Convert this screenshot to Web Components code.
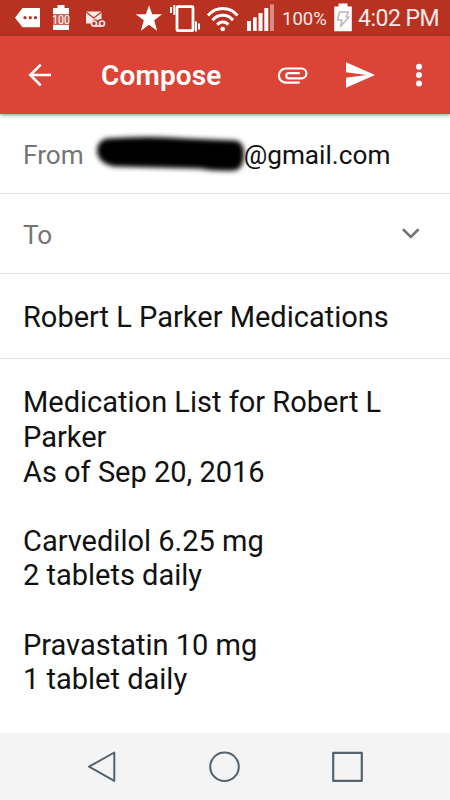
<!DOCTYPE html>
<html lang="en">
<head>
<meta charset="utf-8">
<title>Compose</title>
<style>
  body {
    margin: 0;
    background: #fff;
    font-family: Roboto, "Noto Sans", sans-serif;
    color: #111;
  }
</style>
</head>
<body>
<mail-screen></mail-screen>

<script>
// viewBox of each icon is also its size in pixels
const icons = {
  tag: ['15 0 25 36', `
    <path fill="#fff" d="M15 17.7 22.5 8H40v19.2H22.5z"/>
    <g fill="#b93221"><circle cx="25" cy="17.7" r="1.6"/><circle cx="30.3" cy="17.7" r="1.6"/><circle cx="35.5" cy="17.7" r="1.6"/></g>`],
  level: ['51 0 20 36', `
    <path fill="#fff" d="M57.5 5h7v3H69v6H53V8h4.500zM53 25h16v5H53z"/>
    <path fill="#fff" fill-opacity=".25" d="M53 14h16v11H53z"/>
    <text x="61" y="23.700" text-anchor="middle" font-size="12" textLength="18" lengthAdjust="spacingAndGlyphs" fill="#fff">100</text>`],
  voicemail: ['85 0 21 36', `
    <path fill="#fbe9e7" d="M86 11.500h15.500V19a4 4 0 0 0-4 1.500 3.500 3.500 0 0 0-6 3H86z"/>
    <path fill="none" stroke="#b93221" stroke-width="1.200" d="m86 12 7.800 6 7.700-6"/>
    <g fill="none" stroke="#fbe9e7" stroke-width="1.700"><circle cx="94" cy="23.500" r="2.500"/><circle cx="102" cy="23.500" r="2.500"/><path d="M94 26h8"/></g>`],
  star: ['136 0 27 36', `
    <path fill="#fff" d="m149 5.300 3.200 9h9.900l-7.900 6 2.900 10.500-8.100-6.100-8.100 6.100 2.900-10.500-7.900-6h9.900z"/>`],
  vibrate: ['169 0 32 36', `
    <rect x="177" y="6.700" width="16" height="24" rx="1" fill="none" stroke="#fff" stroke-width="2.800"/>
    <path fill="none" stroke="#fff" stroke-width="2" d="M174.300 5v10M171 7v6M196 21.500v10M199 23.500v6"/>`],
  wifi: ['206 0 33 36', `
    <g fill="none" stroke="#fff" stroke-width="3"><path d="M208 15.500c8-9.300 21.500-9.300 29.500 0M212.500 20.300c5.500-6.600 15-6.600 20.500 0M217.300 24.700c3-3.700 8-3.700 11 0"/></g>
    <circle cx="222.700" cy="29" r="2.300" fill="#fff"/>`],
  signal: ['246 0 29 36', `
    <path fill="#fff" d="M247 21h4v10h-4zM253 17.300h3.700V31H253zM258.500 13h4v18h-4zM264.300 8h4v23h-4z"/>
    <path fill="#d98c82" d="M270 4.300h4V31h-4z"/>`],
  battery: ['334 0 18 36', `
    <path fill="#fff" d="M338.500 3.500h9v3h4.300v24.700H334.200V6.500h4.300z"/>
    <path fill="#fff" stroke="#b9b9b9" stroke-width="1.500" stroke-linejoin="round" d="M339.500 12h9l-2.500 5h3l-8.500 9.500 1.500-6.500h-4.500z"/>`],
  back: ['26 61 28 28', `
    <path fill="none" stroke="#fff" stroke-width="2.600" d="M51 75H30.500M40.700 64.700 30.300 75l10.400 10.300"/>`],
  attach: ['277 60 31 31', `
    <path fill="none" stroke="#fff" stroke-width="2.200" d="M299.700 82.700H286a7.100 7.100 0 0 1 0-14.200h15.500a4.900 4.900 0 0 1 0 9.800H288.800a2.500 2.500 0 0 1 0-5.100h11"/>`],
  send: ['345 60 31 31', `
    <path fill="#fff" d="M346 62.300 375 75l-29 12.700v-9.900L366.500 75 346 72.200z"/>`],
  more: ['412 60 14 31', `
    <g fill="#fff"><circle cx="419" cy="66.700" r="3"/><circle cx="419" cy="75" r="3"/><circle cx="419" cy="83.400" r="3"/></g>`],
  chevron: ['400 227 22 16', `
    <path fill="none" stroke="#757575" stroke-width="2.600" d="m403 229.300 7.800 7.700 7.800-7.700"/>`],
  navBack: ['87 750 30 34', `
    <path fill="none" stroke="#54636e" stroke-width="2" stroke-linejoin="round" d="M89 766.700 114.300 752.500v28.400z"/>`],
  navHome: ['208 750 33 34', `
    <circle cx="224.500" cy="766.700" r="14.300" fill="none" stroke="#54636e" stroke-width="2"/>`],
  navRecent: ['331 750 33 34', `
    <path fill="none" stroke="#54636e" stroke-width="2.200" stroke-linejoin="round" d="M333.200 752.800h28.600v28h-28.600z"/>`],
};

class MailIcon extends HTMLElement {
  connectedCallback() {
    const [box, shapes] = icons[this.getAttribute('name')];
    const [, , width, height] = box.split(' ');
    this.attachShadow({ mode: 'open' });
    this.shadowRoot.innerHTML = `
      <style>
        :host { display: block; flex: none; }
        svg { display: block; }
      </style>
      <svg viewBox="${box}" width="${width}" height="${height}">${shapes}</svg>
    `;
  }
}

class StatusBar extends HTMLElement {
  connectedCallback() {
    this.attachShadow({ mode: 'open' });
    this.shadowRoot.innerHTML = `
      <style>
        :host {
          display: flex;
          height: 36px;
          padding-left: 15px;
          background: #b93221;
          color: #fbe9e7;
          line-height: 37px;
          white-space: nowrap;
        }
        .level { margin-left: 11px; }
        .voicemail { margin-left: 14px; }
        .star { margin-left: 30px; }
        .vibrate { margin-left: 6px; }
        .wifi { margin-left: 5px; }
        .signal { margin-left: 7px; }
        .percent { width: 52px; margin-left: 7px; font-size: 18.500px; line-height: 38px; }
        .time { margin-left: 6px; font-size: 23px; letter-spacing: -.5px; }
      </style>
      <mail-icon name="tag"></mail-icon>
      <mail-icon class="level" name="level"></mail-icon>
      <mail-icon class="voicemail" name="voicemail"></mail-icon>
      <mail-icon class="star" name="star"></mail-icon>
      <mail-icon class="vibrate" name="vibrate"></mail-icon>
      <mail-icon class="wifi" name="wifi"></mail-icon>
      <mail-icon class="signal" name="signal"></mail-icon>
      <span class="percent">100%</span>
      <mail-icon name="battery"></mail-icon>
      <span class="time">4:02 PM</span>
    `;
  }
}

class AppBar extends HTMLElement {
  connectedCallback() {
    this.attachShadow({ mode: 'open' });
    this.shadowRoot.innerHTML = `
      <style>
        :host {
          display: flex;
          align-items: center;
          box-sizing: border-box;
          height: 78px;
          padding: 0 24px 0 26px;
          background: #db4437;
          box-shadow: 0 1px 4px rgba(0, 0, 0, .45);
          color: #fff;
        }
        h1 {
          flex: 1;
          margin: 2px 0 0 47px;
          font-size: 28px;
          font-weight: 600;
          letter-spacing: .15px;
          line-height: 32px;
        }
        .send { margin: 0 36px 0 37px; }
      </style>
      <mail-icon name="back"></mail-icon>
      <h1><slot></slot></h1>
      <mail-icon name="attach"></mail-icon>
      <mail-icon class="send" name="send"></mail-icon>
      <mail-icon name="more"></mail-icon>
    `;
  }
}

class ComposeField extends HTMLElement {
  connectedCallback() {
    const label = this.getAttribute('label');
    this.attachShadow({ mode: 'open' });
    this.shadowRoot.innerHTML = `
      <style>
        :host {
          display: flex;
          align-items: center;
          box-sizing: border-box;
          height: 80px;
          padding: 2px 28px 0 23px;
          border-bottom: 1px solid #e0e0e0;
          font-size: 26.200px;
          white-space: nowrap;
        }
        .label { flex: none; color: #757575; }
        .value { flex: 1; display: flex; align-items: center; }
      </style>
      ${label ? `<span class="label">${label}</span>` : ''}
      <div class="value"><slot></slot></div>
      <slot name="action"></slot>
    `;
  }
}

// sender name scribbled over with a soft black brush
class HiddenName extends HTMLElement {
  connectedCallback() {
    this.attachShadow({ mode: 'open' });
    this.shadowRoot.innerHTML = `
      <style>
        :host { display: block; flex: none; width: 160px; height: 44px; }
        svg { display: block; overflow: visible; }
      </style>
      <svg width="160" height="44" viewBox="83 132 160 44">
        <filter id="soft" x="-10%" y="-40%" width="120%" height="180%"><feGaussianBlur stdDeviation="2.700"/></filter>
        <path filter="url(#soft)" fill="#000" d="M105 137.500q45-3 80 0l50 2q8 2 8 13 0 15-9 17-20 1-36-2l-85-2q-16-3-17-16 0-9 9-12z"/>
      </svg>
    `;
  }
}

class MessageBody extends HTMLElement {
  connectedCallback() {
    this.attachShadow({ mode: 'open' });
    this.shadowRoot.innerHTML = `
      <style>
        :host {
          display: block;
          flex: 1;
          padding: 26.200px 23px 0;
          font-size: 29px;
          line-height: 34.650px;
        }
        ::slotted(p) { margin: 0 0 34.650px; }
      </style>
      <slot></slot>
    `;
  }
}

class NavBar extends HTMLElement {
  connectedCallback() {
    this.attachShadow({ mode: 'open' });
    this.shadowRoot.innerHTML = `
      <style>
        :host {
          display: flex;
          align-items: center;
          justify-content: space-between;
          box-sizing: border-box;
          height: 67px;
          padding: 0 86px 0 87px;
          background: #f4f4f4;
        }
      </style>
      <mail-icon name="navBack"></mail-icon>
      <mail-icon name="navHome"></mail-icon>
      <mail-icon name="navRecent"></mail-icon>
    `;
  }
}

class MailScreen extends HTMLElement {
  connectedCallback() {
    this.attachShadow({ mode: 'open' });
    this.shadowRoot.innerHTML = `
      <style>
        :host {
          display: flex;
          flex-direction: column;
          width: 450px;
          height: 800px;
          overflow: hidden;
        }
        .subject { height: 85px; font-size: 29px; }
      </style>
      <status-bar></status-bar>
      <app-bar>Compose</app-bar>
      <compose-field label="From"><hidden-name></hidden-name><span>@gmail.com</span></compose-field>
      <compose-field label="To"><mail-icon slot="action" name="chevron"></mail-icon></compose-field>
      <compose-field class="subject">Robert L Parker Medications</compose-field>
      <message-body>
        <p>Medication List for Robert L Parker<br>As of Sep 20, 2016</p>
        <p>Carvedilol 6.25 mg<br>2 tablets daily</p>
        <p>Pravastatin 10 mg<br>1 tablet daily</p>
      </message-body>
      <nav-bar></nav-bar>
    `;
  }
}

window.customElements.define('mail-icon', MailIcon);
window.customElements.define('status-bar', StatusBar);
window.customElements.define('app-bar', AppBar);
window.customElements.define('compose-field', ComposeField);
window.customElements.define('hidden-name', HiddenName);
window.customElements.define('message-body', MessageBody);
window.customElements.define('nav-bar', NavBar);
window.customElements.define('mail-screen', MailScreen);
</script>
</body>
</html>
